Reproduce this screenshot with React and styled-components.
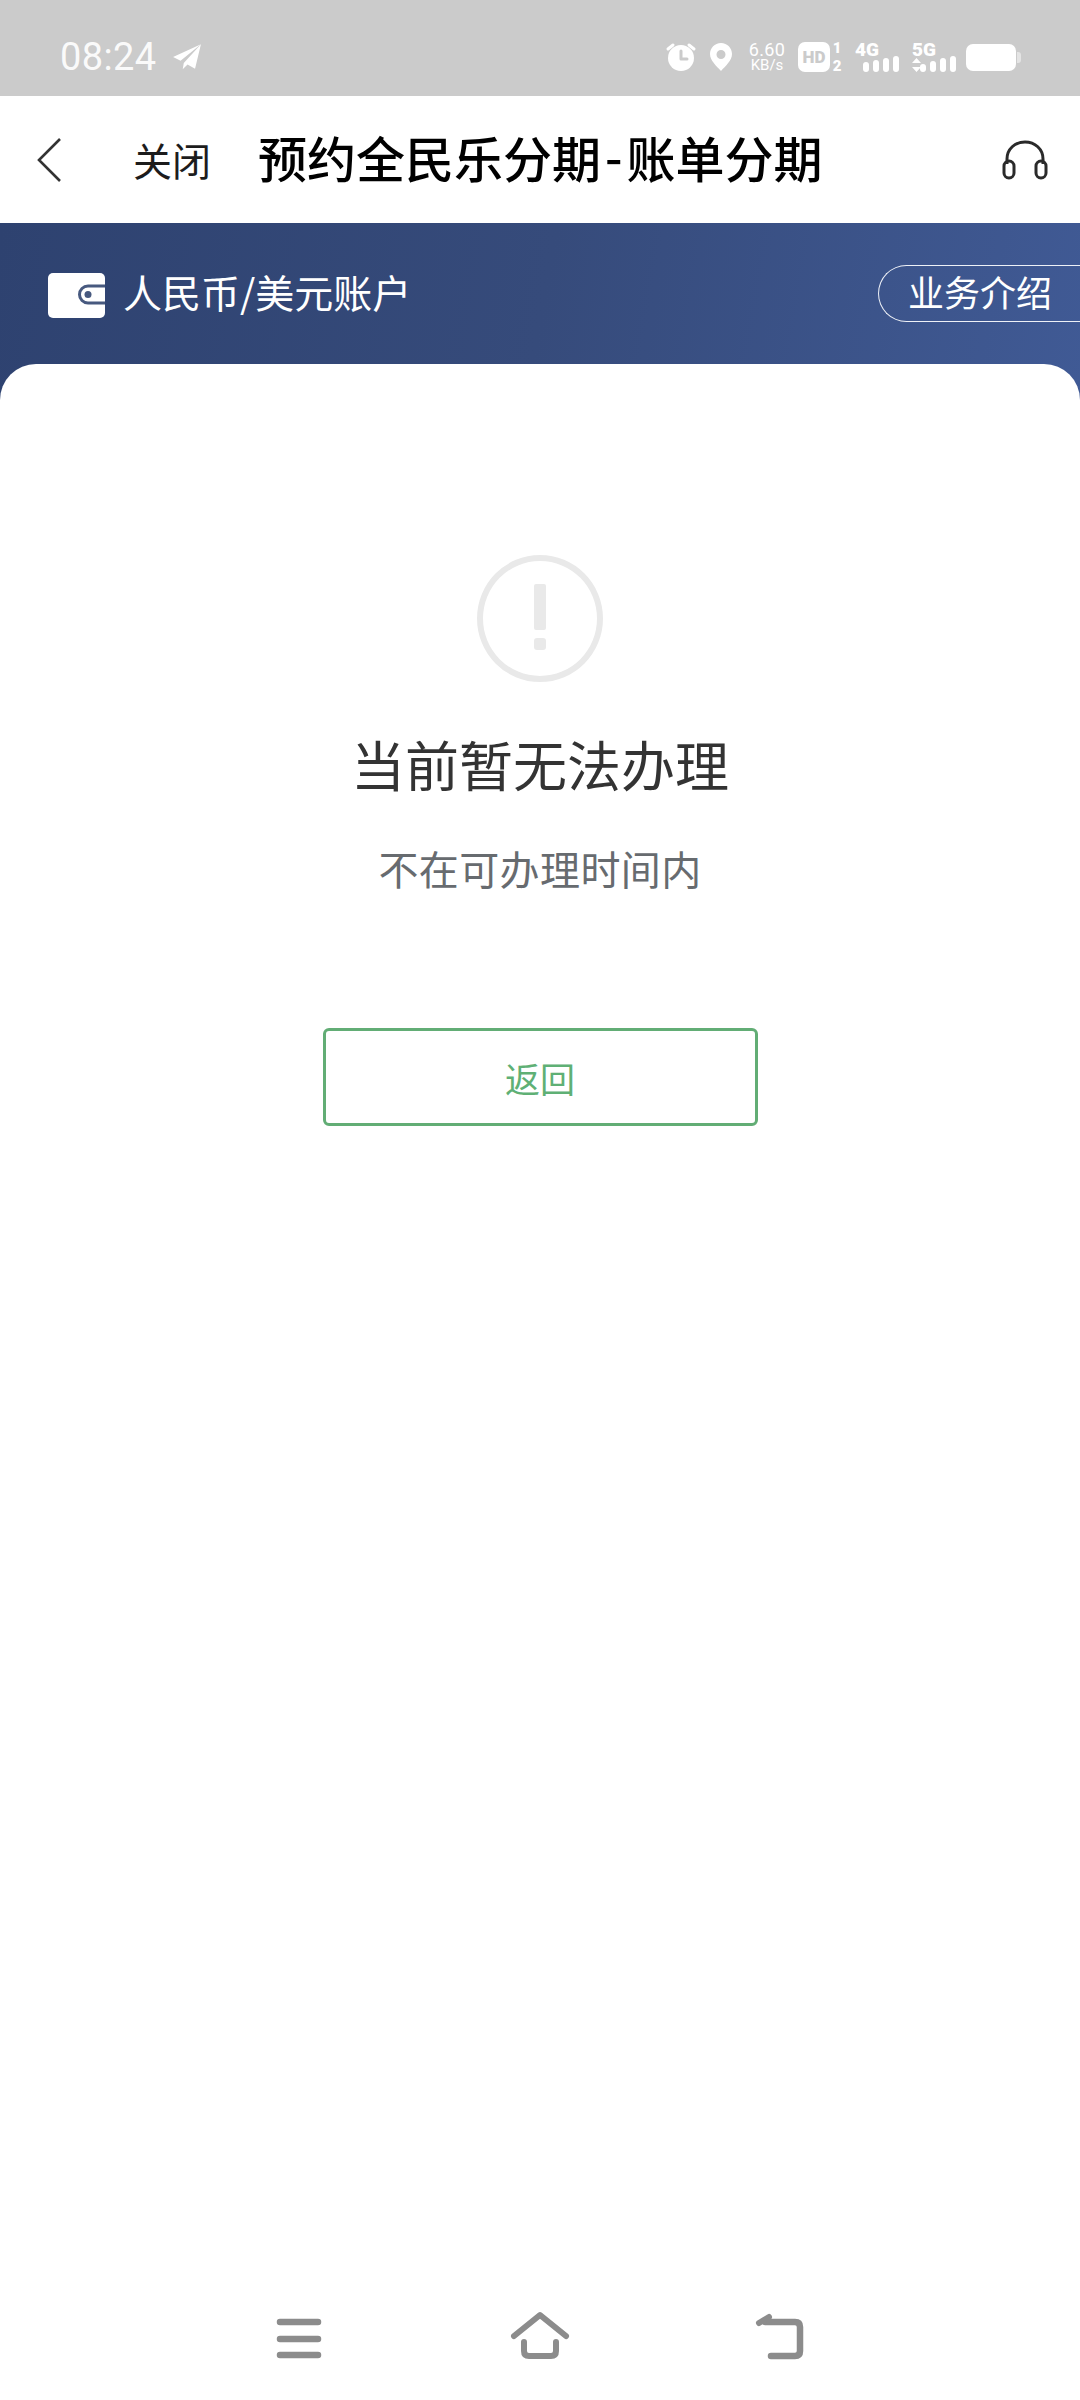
import React from "react";
import styled, { createGlobalStyle } from "styled-components";

const Global = createGlobalStyle`
  html, body { margin: 0; padding: 0; background: #fff; }
  * { box-sizing: border-box; }
  body { font-family: "Noto Sans CJK SC", "Noto Sans", sans-serif; }
`;

const Page = styled.div`
  width: 1080px;
  height: 2400px;
  display: flex;
  flex-direction: column;
  overflow: hidden;
  background: #fff;
`;

const StatusBar = styled.div`
  height: 96px;
  flex: none;
  background: #cbcbcb;
  display: flex;
  align-items: center;
  padding: 18px 60px 0 60px;
  color: #fff;
`;

const Clock = styled.span`
  font-family: Roboto, sans-serif;
  font-size: 38px;
  line-height: 42px;
  letter-spacing: 0.4px;
  opacity: 0.92;
`;

const SendIcon = styled.svg`
  width: 30px;
  height: 30px;
  margin-left: 15px;
`;

const StatusRight = styled.div`
  margin-left: auto;
  display: flex;
  align-items: center;
  height: 32px;
`;

const StatusGlyph = styled.svg`
  flex: none;
  display: block;
  margin-left: ${(p) => p.$gap || 0}px;
`;

const Speed = styled.div`
  margin-left: 15px;
  width: 38px;
  display: flex;
  flex-direction: column;
  align-items: center;
  font-family: Roboto, sans-serif;
  color: #fff;
`;

const SpeedValue = styled.span`
  font-size: 18px;
  line-height: 16px;
  letter-spacing: 0.3px;
`;

const SpeedUnit = styled.span`
  font-size: 15px;
  line-height: 15px;
`;

const HdBadge = styled.div`
  margin-left: 12px;
  width: 32px;
  height: 30px;
  border-radius: 7px;
  background: #fff;
  color: #cbcbcb;
  display: flex;
  align-items: center;
  justify-content: center;
  font-family: Roboto, sans-serif;
  font-weight: 900;
  font-size: 17px;
  line-height: 1;
`;

const SimStack = styled.div`
  width: 12px;
  margin-left: 1px;
  display: flex;
  flex-direction: column;
  align-items: center;
  font-family: Roboto, sans-serif;
  font-weight: 900;
  font-size: 15px;
  line-height: 18px;
`;

const Signal = styled.div`
  position: relative;
  margin-left: ${(p) => p.$gap}px;
  width: ${(p) => p.$w}px;
  height: 30px;
  flex: none;
`;

const SignalLabel = styled.span`
  position: absolute;
  left: 0;
  top: 0;
  font-family: Roboto, sans-serif;
  font-weight: 900;
  font-size: 19px;
  line-height: 16px;
`;

const SignalBars = styled.div`
  position: absolute;
  right: 0;
  bottom: 0;
  display: flex;
  align-items: flex-end;
  gap: 4px;
`;

const SignalBar = styled.i`
  display: block;
  width: 6px;
  height: ${(p) => p.$h}px;
  border-radius: 3px;
  background: #fff;
`;

const SignalArrows = styled.svg`
  position: absolute;
  left: 0;
  bottom: 0;
`;

const Battery = styled.div`
  margin-left: 10px;
  width: 50px;
  height: 27px;
  margin-right: 4px;
  border-radius: 7px;
  background: #fff;
  position: relative;
  &::after {
    content: "";
    position: absolute;
    right: -5px;
    top: 8px;
    width: 4px;
    height: 11px;
    border-radius: 0 3px 3px 0;
    background: #e4e4e4;
  }
`;

const Header = styled.header`
  height: 127px;
  flex: none;
  display: flex;
  align-items: center;
  padding: 0 29px 0 36px;
  background: #fff;
`;

const BackIcon = styled.svg`
  width: 26px;
  height: 46px;
  flex: none;
`;

const CloseLabel = styled.span`
  margin-left: 71px;
  font-size: 39px;
  line-height: 48px;
  color: #1c1c1c;
  flex: none;
  position: relative;
  top: -1px;
`;

const Title = styled.h1`
  margin: -5px 0 0 47px;
  font-size: 49px;
  line-height: 64px;
  font-weight: 500;
  color: #000;
  white-space: nowrap;
`;

const TitleDash = styled.span`
  display: inline-block;
  padding: 0 4px;
  transform: translateY(-2px);
`;

const HeadsetIcon = styled.svg`
  margin-left: auto;
  margin-right: 3px;
  width: 46px;
  height: 40px;
  flex: none;
`;

const Main = styled.main`
  flex: 1;
  min-height: 0;
  display: flex;
  flex-direction: column;
  background: linear-gradient(100deg, #2e4270 0%, #364b7b 50%, #405a95 100%) top left / 100% 190px no-repeat;
`;

const Banner = styled.div`
  height: 141px;
  flex: none;
  display: flex;
  align-items: center;
  padding-left: 48px;
`;

const WalletIcon = styled.svg`
  width: 57px;
  height: 45px;
  flex: none;
  margin-top: 4px;
`;

const AccountLabel = styled.span`
  margin-left: 18px;
  margin-top: -6px;
  font-size: 39px;
  line-height: 50px;
  color: #fff;
  white-space: nowrap;
`;

const IntroPill = styled.div`
  margin-left: auto;
  width: 202px;
  height: 57px;
  border: 1.5px solid #eef1f7;
  border-right: none;
  border-radius: 29px 0 0 29px;
  padding: 0 0 5px 29px;
  display: flex;
  align-items: center;
  font-size: 36px;
  color: #fff;
  white-space: nowrap;
`;

const Card = styled.section`
  flex: 1;
  min-height: 0;
  background: #fff;
  border-radius: 36px 36px 0 0;
  display: flex;
  flex-direction: column;
  align-items: center;
  padding-top: 191px;
`;

const AlertRing = styled.div`
  width: 126px;
  height: 127px;
  border-radius: 50%;
  border: 6px solid #e9e9e9;
  display: flex;
  flex-direction: column;
  align-items: center;
  padding-top: 23px;
`;

const AlertBar = styled.i`
  display: block;
  width: 12px;
  height: 46px;
  border-radius: 2px;
  background: #e9e9e9;
`;

const AlertDot = styled.i`
  display: block;
  width: 12px;
  height: 12px;
  margin-top: 8px;
  border-radius: 3px;
  background: #e9e9e9;
`;

const Heading = styled.h2`
  margin: 47px 0 0;
  font-size: 54px;
  line-height: 70px;
  font-weight: 400;
  color: #333;
  white-space: nowrap;
`;

const Reason = styled.p`
  margin: 42px 0 0;
  font-size: 40px;
  letter-spacing: 0.4px;
  line-height: 54px;
  color: #676b6f;
  white-space: nowrap;
`;

const ReturnButton = styled.button`
  margin-top: 133px;
  width: 435px;
  height: 98px;
  border: 3px solid #62ad75;
  border-radius: 6px;
  background: #fff;
  font-family: inherit;
  font-size: 35px;
  color: #5fb075;
  padding: 0;
`;

const NavBar = styled.nav`
  background: #fff;
  height: 110px;
  flex: none;
  display: flex;
  justify-content: center;
  gap: 180px;
  padding-top: 20px;
`;

const NavIcon = styled.svg`
  width: 60px;
  height: 60px;
  flex: none;
`;

function StatusIcons() {
  return (
    <StatusRight>
      <StatusGlyph width="32" height="30" viewBox="0 0 32 30">
        <circle cx="16" cy="16" r="13" fill="#fff" />
        <path d="M16 9v8h6" fill="none" stroke="#cbcbcb" strokeWidth="3" strokeLinecap="round" strokeLinejoin="round" />
        <path d="M3 7l5-4M29 7l-5-4" stroke="#fff" strokeWidth="3" strokeLinecap="round" />
      </StatusGlyph>
      <StatusGlyph $gap={12} width="24" height="30" viewBox="0 0 24 30">
        <path fillRule="evenodd" d="M12 1C5.6 1 1 6 1 12c0 6.600 6.500 12 11 17 4.500-5 11-10.400 11-17C23 6 18.400 1 12 1zm0 7a4.500 4.500 0 1 1 0 9 4.500 4.500 0 0 1 0-9z" fill="#fff" />
      </StatusGlyph>
      <Speed>
        <SpeedValue>6.60</SpeedValue>
        <SpeedUnit>KB/s</SpeedUnit>
      </Speed>
      <HdBadge>HD</HdBadge>
      <SimStack>
        <span>1</span>
        <span>2</span>
      </SimStack>
      <Signal $gap={12} $w={44}>
        <SignalLabel>4G</SignalLabel>
        <SignalBars>
          <SignalBar $h={10} />
          <SignalBar $h={12} />
          <SignalBar $h={14} />
          <SignalBar $h={16} />
        </SignalBars>
      </Signal>
      <Signal $gap={13} $w={44}>
        <SignalLabel>5G</SignalLabel>
        <SignalArrows width="9" height="14" viewBox="0 0 9 14">
          <path d="M4.500 0L9 5H0zM0 9h9l-4.500 5z" fill="#fff" />
        </SignalArrows>
        <SignalBars>
          <SignalBar $h={8} />
          <SignalBar $h={11} />
          <SignalBar $h={14} />
          <SignalBar $h={16} />
        </SignalBars>
      </Signal>
      <Battery />
    </StatusRight>
  );
}

export default function App() {
  return (
    <Page>
      <Global />
      <StatusBar>
        <Clock>08:24</Clock>
        <SendIcon viewBox="0 0 28 28">
          <path d="M27 2L1 14l7 3.500L27 2zM27 2L11 19.500l-1 6 4.500-4.500 7 4L27 2z" fill="#fff" />
        </SendIcon>
        <StatusIcons />
      </StatusBar>
      <Header>
        <BackIcon viewBox="0 0 26 46">
          <path d="M24 2L3 23l21 21" fill="none" stroke="#333" strokeWidth="2.600" />
        </BackIcon>
        <CloseLabel>关闭</CloseLabel>
        <Title>预约全民乐分期<TitleDash>-</TitleDash>账单分期</Title>
        <HeadsetIcon viewBox="0 0 46 40">
          <path d="M5 24V19C5 9 13 2 23 2s18 7 18 17v5" fill="none" stroke="#2a2a2a" strokeWidth="3" />
          <rect x="2" y="21" width="10" height="17" rx="5" fill="none" stroke="#2a2a2a" strokeWidth="3" />
          <rect x="34" y="21" width="10" height="17" rx="5" fill="none" stroke="#2a2a2a" strokeWidth="3" />
        </HeadsetIcon>
      </Header>
      <Main>
        <Banner>
          <WalletIcon viewBox="0 0 57 45">
            <rect width="57" height="45" rx="5" fill="#fff" />
            <path d="M57 13H40a8.500 8.500 0 0 0 0 17h17" fill="#fff" stroke="#47597f" strokeWidth="3" />
            <circle cx="40" cy="21.500" r="3.500" fill="#47597f" />
          </WalletIcon>
          <AccountLabel>人民币/美元账户</AccountLabel>
          <IntroPill>业务介绍</IntroPill>
        </Banner>
        <Card>
          <AlertRing>
            <AlertBar />
            <AlertDot />
          </AlertRing>
          <Heading>当前暂无法办理</Heading>
          <Reason>不在可办理时间内</Reason>
          <ReturnButton>返回</ReturnButton>
        </Card>
        <NavBar>
          <NavIcon viewBox="0 0 60 60">
            <path d="M10 12h38M10 29h38M10 45h38" stroke="#8c8c8c" strokeWidth="6.500" strokeLinecap="round" />
          </NavIcon>
          <NavIcon viewBox="0 0 60 60">
            <path d="M4 26L30 5l26 21" fill="none" stroke="#8c8c8c" strokeWidth="6" strokeLinecap="round" strokeLinejoin="round" />
            <path d="M14 32v9q0 5 5 5h22q5 0 5-5v-9" fill="none" stroke="#8c8c8c" strokeWidth="6" strokeLinecap="round" />
          </NavIcon>
          <NavIcon viewBox="0 0 60 60">
            <path d="M15 12h30q5 0 5 5v24q0 5-5 5H21" fill="none" stroke="#8c8c8c" strokeWidth="6.500" strokeLinecap="round" />
            <path d="M9 13l10-6" fill="none" stroke="#8c8c8c" strokeWidth="6" strokeLinecap="round" />
          </NavIcon>
        </NavBar>
      </Main>
    </Page>
  );
}
